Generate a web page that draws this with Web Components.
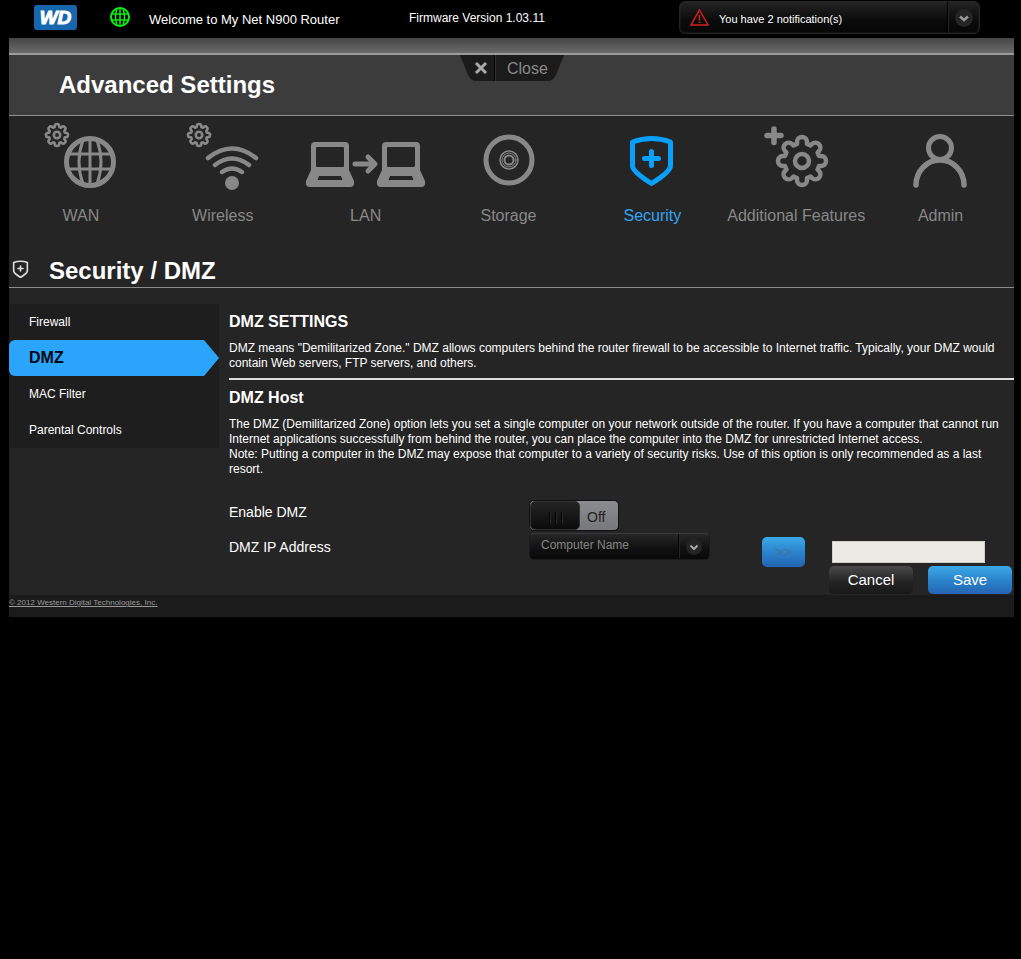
<!DOCTYPE html>
<html lang="en">
<head>
<meta charset="utf-8">
<title>My Net N900 - Security / DMZ</title>
<style>
html{background:#000}
body{margin:0;background:#000;color:#fff;font:12px/15px "Liberation Sans",Arial,sans-serif}
</style>
</head>
<body>
<router-app></router-app>
<script>
const define=(name,html,setup)=>{
  const t=document.createElement('template');
  t.innerHTML='<style>*{box-sizing:border-box}a{color:inherit;text-decoration:none}button,input,select{font:inherit}h1,h2,h3,p,ul{margin:0;padding:0}svg{display:block;flex:none}</style>'+html;
  customElements.define(name,class extends HTMLElement{
    constructor(){
      super();
      this.attachShadow({mode:'open'}).append(t.content.cloneNode(true));
    }
    connectedCallback(){ if(setup) setup(this,this.shadowRoot); }
  });
};

// Eight rounded teeth around the origin, outer radius 24.
const gearPath=(()=>{
  const pt=(x,y,k)=>{const a=k*Math.PI/4,c=Math.cos(a),s=Math.sin(a);return (x*c+y*s).toFixed(2)+' '+(x*s-y*c).toFixed(2)};
  let d='';
  for(let k=0;k<8;k++) d+=(k?'L':'M')+pt(-5,17,k)+'L'+pt(-5,19,k)+'A5 5 0 0 1 '+pt(5,19,k)+'L'+pt(5,17,k);
  return d+'Z';
})();
const gear=(x,y,s,w)=>`<g transform="translate(${x} ${y}) scale(${s})" stroke-width="${w}"><path d="${gearPath}"/><circle r="7"/></g>`;
const laptop=x=>`<g transform="translate(${x} 6)"><path fill="currentColor" stroke="none" fill-rule="evenodd" d="M9 20H39Q43 20 43 24V48L48 59Q49 65 44 65H4Q-1 65 0 59L5 48V24Q5 20 9 20ZM11 25Q10 25 10 26V44Q10 45 11 45H37Q38 45 38 44V26Q38 25 37 25ZM13 54L11.500 58H36.500L35 54Z"/></g>`;
const shield='<path d="M3.500 7Q23 0 41.500 7V31Q41 37 22.500 48.500Q4 37 3.500 31Z"/><path d="M22.500 16.500V30.500M15.500 23.500H29.500"/>';
const icons={
  wan:gear(48,19,.46,5.5)+'<g transform="translate(81 46)"><circle r="23.500" stroke-width="5"/><path stroke-width="3" d="M0 -23V23M-21 -8H21M-21 7H21M-7 -22Q-15 0 -7 22M7 -22Q15 0 7 22"/></g>',
  wireless:gear(48,19,.46,5.5)+'<path stroke-width="4.500" d="M57 42Q81 23 105 42M64 49Q81 36 98 49M71 56Q81 49 91 56"/><circle cx="81" cy="67" r="7" fill="currentColor" stroke="none"/>',
  lan:laptop(12)+laptop(83)+'<path stroke-width="5" d="M61 48H80M74 41L81 48L74 55"/>',
  storage:'<g transform="translate(72 44)"><circle r="23" stroke-width="5"/><circle r="9" stroke-width="1.500"/><circle r="7" stroke-width="1"/><circle r="4.500" stroke-width="2"/></g>',
  security:'<g transform="translate(49 19)" stroke-width="5">'+shield+'</g>',
  features:gear(78,45,1,4.500)+'<path stroke-width="5.500" d="M50 13V26.500M43 19.500H57"/>',
  admin:'<circle cx="71" cy="32" r="11.500" stroke-width="5"/><path stroke-width="5.500" d="M47 69A24 25 0 0 1 95 69"/>'
};

define('app-icon','<style>:host{display:block}svg{overflow:visible}</style><svg width="144" height="84" viewBox="0 0 144 84" fill="none" stroke="currentColor" stroke-linecap="round" stroke-linejoin="round" aria-hidden="true"></svg>',
  (h,r)=>{r.querySelector('svg').innerHTML=icons[h.getAttribute('name')]||''});

define('section-link',`<style>
:host{display:block;min-width:0;color:#888}
:host([current]){color:#34a4f4}
:host([current]) app-icon{color:#08a0fa}
a{display:flex;flex-direction:column;align-items:center;font-size:16px;line-height:20px;white-space:nowrap;padding-bottom:5px}
app-icon{height:90px}
</style><a href="#"><app-icon></app-icon><slot></slot></a>`,
  (h,r)=>{const i=r.querySelector('app-icon');i.setAttribute('name',h.getAttribute('icon'));i.connectedCallback();if(h.hasAttribute('current'))r.querySelector('a').setAttribute('aria-current','page')});

define('notification-bar',`<style>
:host{display:block;flex:0 1 301px}
button{display:flex;align-items:center;width:100%;height:33px;padding:0 0 0 10px;border:1px solid #252525;border-radius:6px;background:linear-gradient(#232323,#0b0b0b 60%,#060606);color:#fff;font-size:11px;text-align:left;box-shadow:inset 0 0 2px #333}
span{flex:1;padding-left:10px;padding-top:3px}
i{display:flex;align-items:center;justify-content:center;width:32px;height:31px;border-left:1px solid #000;box-shadow:inset 1px 0 #252525}
</style><button type="button"><svg width="19" height="18" viewBox="0 0 19 18" fill="none" stroke="#d42020" stroke-width="1.500"><path d="M9.500 1L18 16H1Z"/><path d="M9.500 6V11.500M9.500 12.500V14"/></svg><span><slot></slot></span><i><svg width="20" height="20" viewBox="0 0 20 20" fill="none"><circle cx="10" cy="10" r="9" fill="#252525"/><path d="M6 8.500L10 12L14 8.500" stroke="#999" stroke-width="2.500"/></svg></i></button>`);

define('top-bar',`<style>
:host{display:flex;align-items:flex-start;height:38px;padding:1px 34px 0 25px}
.logo{width:43px;height:25px;margin-top:4px;background:#1767ae;border-radius:3px;font:italic bold 19px/25px "Liberation Sans",Arial,sans-serif;text-align:center;-webkit-text-stroke:1px #fff}
.globe{margin:5px 18px 0 32px}
.welcome{flex:none;width:260px;font-size:13px;line-height:20px;margin-top:9px}
.fw{font-size:12px;line-height:20px;margin-top:7px;white-space:nowrap}
notification-bar{margin-left:auto}
</style>
<a class="logo" href="#">WD</a>
<svg class="globe" width="22" height="22" viewBox="0 0 22 22" fill="none" stroke="#10ee18" stroke-width="1.500"><circle cx="11" cy="11" r="9" stroke-width="2"/><path d="M11 2V20M2.500 8H19.500M2.500 14H19.500M8 3Q5 11 8 19M14 3Q17 11 14 19"/></svg>
<span class="welcome">Welcome to My Net N900 Router</span>
<span class="fw">Firmware Version 1.03.11</span>
<notification-bar>You have 2 notification(s)</notification-bar>`);

define('close-tab',`<style>
:host{display:block}
button{display:flex;align-items:center;width:104px;height:26px;padding:0;border:0;background:none;color:#8a8a8a;font-size:16px;line-height:20px;position:relative}
.bg{position:absolute;inset:0}
.x{position:relative;margin-left:14px}
span{position:relative;padding:2px 0 0 19px}
</style><button type="button"><svg class="bg" width="104" height="26" viewBox="0 0 104 26"><path fill="#1b1b1b" d="M0 0H104L96 20Q93 26 88 26H16Q11 26 8 20Z"/><path d="M34.500 0V26" stroke="#060606"/><path d="M35.500 0V26" stroke="#303030"/></svg><svg class="x" width="14" height="14" viewBox="0 0 14 14" stroke="#aaa" stroke-width="3"><path d="M2 2L12 12M12 2L2 12"/></svg><span><slot></slot></span></button>`);

define('title-band',`<style>
:host{display:block;border-bottom:1px solid #8d8d8d}
.strip{height:17px;background:linear-gradient(#454545,#6b6b6b);border-bottom:2px solid #9b9b9b}
.row{display:grid;grid-template-columns:451px 1fr;align-items:start;height:60px;background:#3c3c3c}
h1{padding:15px 0 0 50px;font-size:24px;line-height:30px}
</style><div class="strip"></div><div class="row"><h1><slot></slot></h1><close-tab>Close</close-tab></div>`);

define('section-nav',`<style>
:host{display:block}
nav{display:grid;grid-template-columns:142fr 142fr 144fr 142fr 146fr 142fr 147fr;padding-left:1px}
</style><nav aria-label="Sections">
<section-link icon="wan">WAN</section-link><section-link icon="wireless">Wireless</section-link><section-link icon="lan">LAN</section-link><section-link icon="storage">Storage</section-link><section-link icon="security" current>Security</section-link><section-link icon="features">Additional Features</section-link><section-link icon="admin">Admin</section-link></nav>`);

define('page-heading',`<style>
:host{display:flex;align-items:flex-start;gap:20px;height:57px;padding:25px 0 0 3px;border-bottom:1px solid #8d8d8d}
svg{margin-top:4px}
h2{font-size:24px;line-height:30px}
</style><svg width="17" height="18" viewBox="0 0 45 50" fill="none" stroke="#ddd" stroke-width="4.500" stroke-linecap="round" stroke-linejoin="round">${shield}</svg><h2><slot></slot></h2>`);

define('side-item',`<style>
:host{display:block;height:36px}
a{display:block;padding-left:20px;line-height:36px}
:host([current]) a{background:#2aa5fb;color:#00060c;font-size:16px;font-weight:bold;border-radius:6px 0 0 6px;clip-path:polygon(0 0,calc(100% - 15px) 0,100% 50%,calc(100% - 15px) 100%,0 100%)}
</style><a href="#"><slot></slot></a>`);

define('side-menu',`<style>
:host{display:block}nav{background:#1e1e1e}
</style><nav aria-label="Security"><side-item>Firewall</side-item><side-item current>DMZ</side-item><side-item>MAC Filter</side-item><side-item>Parental Controls</side-item></nav>`);

define('action-button',`<style>
:host{display:block}
button{display:block;width:100%;height:28px;padding:0;border:0;border-radius:5px;background:linear-gradient(#4a4a4a,#242424 55%,#191919);color:#fff;font-size:15px;line-height:28px}
:host([primary]) button{background:linear-gradient(#3ca9e8,#2b84cc 50%,#2464b2)}
:host([disabled]) button{height:30px;color:#46729a;box-shadow:0 0 2px #10324c}
</style><button type="button"><slot></slot></button>`,(h,r)=>{r.querySelector('button').disabled=h.hasAttribute('disabled')});

define('dmz-form',`<style>
:host{display:block;padding-top:23px}
form{display:block}
label.name{font-size:14px;line-height:20px}
.row{display:grid;grid-template-columns:300px auto;justify-content:start}
.row.enable{height:33px}
.enable .name{padding-top:2px}
.lines{display:grid;grid-template-columns:300px 181px 1fr 43px 27px 153px 29px;align-items:start;height:33px}
.lines .name{padding-top:4px}
.toggle{position:relative;display:flex;width:90px;height:31px;border-radius:5px;background:linear-gradient(#8b8c8f,#77787b);border:1px solid #111;overflow:hidden;color:#222;font-size:14px;line-height:33px}
.toggle input{appearance:none;margin:0;width:50px;height:29px;border:1px solid #303030;border-radius:5px;background:linear-gradient(90deg,#000 1px,#292929 1px 2px,#0000 2px 6px,#000 6px 7px,#292929 7px 8px,#0000 8px 12px,#000 12px 13px,#292929 13px) 18px 10px/14px 12px no-repeat,linear-gradient(#242424,#0b0b0b)}
.toggle span{padding-left:7px}
.pick{position:relative;display:block}
select{appearance:none;display:block;width:100%;height:27px;padding:0 40px 3px 11px;border:1px solid #1a1a1a;border-top-color:#3b3b3b;border-radius:5px;background:linear-gradient(#262626,#101010 60%,#090909);color:#858585;font-size:12px;opacity:1}
.chev{position:absolute;right:0;top:1px;pointer-events:none}
.ip{height:22px;width:100%;padding:0 4px;border:1px solid #d0cfca;background:#ebeae5;color:#222}
.go{padding-top:4px}
.field{padding-top:8px;grid-column:6}
.actions{display:flex;justify-content:flex-end;gap:15px;padding-right:2px;height:29px}
.actions action-button{width:84px}
</style>
<form>
<div class="row enable"><label class="name" for="enable">Enable DMZ</label><div class="toggle"><input id="enable" type="checkbox" role="switch"><span>Off</span></div></div>
<div class="lines"><label class="name" for="host">DMZ IP Address</label>
<div class="pick"><select id="host" disabled><option>Computer Name</option></select><svg class="chev" width="33" height="25" viewBox="0 0 33 25" fill="none"><path d="M1.500 0V24" stroke="#050505"/><path d="M2.500 0V24" stroke="#252525"/><circle cx="17" cy="13" r="8" fill="#242424"/><path d="M13.500 11.500L17 15L20.500 11.500" stroke="#aaa" stroke-width="2"/></svg></div><span></span>
<div class="go"><action-button primary disabled>&gt;&gt;</action-button></div>
<div class="field"><input class="ip" type="text" aria-label="DMZ IP Address" disabled></div></div>
<div class="actions"><action-button>Cancel</action-button><action-button primary>Save</action-button></div>
</form>`);

define('dmz-content',`<style>
:host{display:block;min-width:0}
h3{font-size:16px;line-height:20px}
.intro{padding:9px 0 7px;border-bottom:2px solid #dedede}
h3.host{padding-top:8px}
.help{padding-top:9px}
</style>
<h3>DMZ SETTINGS</h3>
<p class="intro">DMZ means "Demilitarized Zone." DMZ allows computers behind the router firewall to be accessible to Internet traffic. Typically, your DMZ would contain Web servers, FTP servers, and others.</p>
<h3 class="host">DMZ Host</h3>
<p class="help">The DMZ (Demilitarized Zone) option lets you set a single computer on your network outside of the router. If you have a computer that cannot run Internet applications successfully from behind the router, you can place the computer into the DMZ for unrestricted Internet access.<br>Note: Putting a computer in the DMZ may expose that computer to a variety of security risks. Use of this option is only recommended as a last resort.</p>
<dmz-form></dmz-form>`);

define('router-app',`<style>
:host{display:block;padding:0 7px 0 9px}
main{background:#252525}
.body{display:grid;grid-template-columns:210px 1fr;column-gap:10px;align-items:start;padding-top:16px}
dmz-content{padding-top:8px}
footer{height:22px;background:#1b1b1b;font-size:8px;line-height:16px;color:#999}
footer a{text-decoration:underline}
</style>
<top-bar></top-bar>
<main><title-band>Advanced Settings</title-band><section-nav></section-nav><page-heading>Security / DMZ</page-heading>
<div class="body"><side-menu></side-menu><dmz-content></dmz-content></div></main>
<footer><a href="#">© 2012 Western Digital Technologies, Inc.</a></footer>`);
</script>
</body>
</html>
